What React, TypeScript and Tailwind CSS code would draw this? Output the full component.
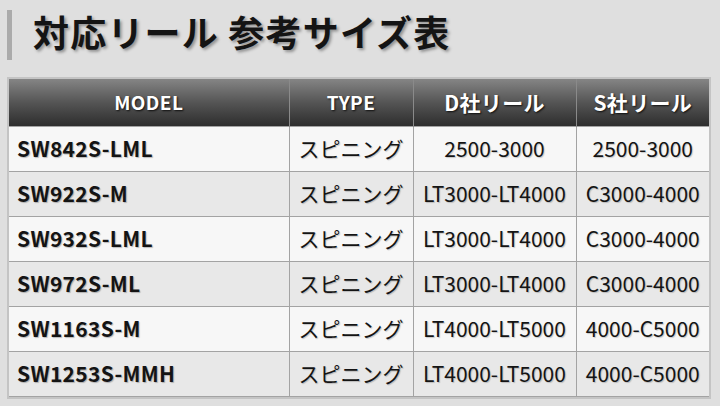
import React from 'react';

const rows = [
  ['SW842S-LML', 'スピニング', '2500-3000', '2500-3000'],
  ['SW922S-M', 'スピニング', 'LT3000-LT4000', 'C3000-4000'],
  ['SW932S-LML', 'スピニング', 'LT3000-LT4000', 'C3000-4000'],
  ['SW972S-ML', 'スピニング', 'LT3000-LT4000', 'C3000-4000'],
  ['SW1163S-M', 'スピニング', 'LT4000-LT5000', '4000-C5000'],
  ['SW1253S-MMH', 'スピニング', 'LT4000-LT5000', '4000-C5000'],
];

const App: React.FC = () => {
  return (
    <div className="w-[720px] h-[406px] overflow-hidden bg-[#dfdfdf] font-['Noto_Sans_CJK_JP',sans-serif] text-[#141414]">
      {/* Heading */}
      <div className="flex items-center h-[50px] mt-[10px] ml-[7px] border-l-[5px] border-[#ababab] pl-[21px]">
        <h1 className="pb-[8px] text-[36px] font-bold leading-none tracking-[1.2px] [text-shadow:2px_2px_3px_rgba(0,0,0,0.35)]">
          対応リール 参考サイズ表
        </h1>
      </div>

      {/* Table */}
      <div className="mt-[17px] ml-[7px] w-[704px] border-2 border-[#c4c4c4]">
        <table className="w-full border-collapse table-fixed">
          <colgroup>
            <col className="w-[280px]" />
            <col className="w-[124px]" />
            <col className="w-[163px]" />
            <col />
          </colgroup>
          <thead>
            <tr className="h-[47px] bg-gradient-to-b from-[#858585] via-[#555555] to-[#2e2e2e]">
              {['MODEL', 'TYPE', 'D社リール', 'S社リール'].map((h, i) => (
                <th
                  key={h}
                  className={`text-white font-bold [text-shadow:1px_1px_2px_rgba(0,0,0,0.8)] border-r border-[#8a8a8a] last:border-r-0 ${
                    i < 2 ? 'text-[19px] tracking-[0.4px]' : 'text-[21px] tracking-[0.3px]'
                  }`}
                >
                  {h}
                </th>
              ))}
            </tr>
          </thead>
          <tbody>
            {rows.map((r, ri) => (
              <tr key={r[0]} className={`h-[45px] ${ri % 2 === 0 ? 'bg-[#f7f7f7]' : 'bg-[#e8e8e8]'}`}>
                <td className="border border-[#a3a3a3] border-l-0 pl-[8px] text-[21px] font-bold whitespace-nowrap tracking-[0.3px] [text-shadow:1px_1px_1px_rgba(0,0,0,0.25)]">
                  {r[0]}
                </td>
                <td className="border border-[#a3a3a3] text-center text-[21px] whitespace-nowrap [text-shadow:1px_1px_1px_rgba(0,0,0,0.2)]">{r[1]}</td>
                <td className="border border-[#a3a3a3] text-center text-[21px] whitespace-nowrap [text-shadow:1px_1px_1px_rgba(0,0,0,0.2)]">{r[2]}</td>
                <td className="border border-[#a3a3a3] border-r-0 text-center text-[21px] whitespace-nowrap [text-shadow:1px_1px_1px_rgba(0,0,0,0.2)]">{r[3]}</td>
              </tr>
            ))}
          </tbody>
        </table>
      </div>
    </div>
  );
};

export default App;
